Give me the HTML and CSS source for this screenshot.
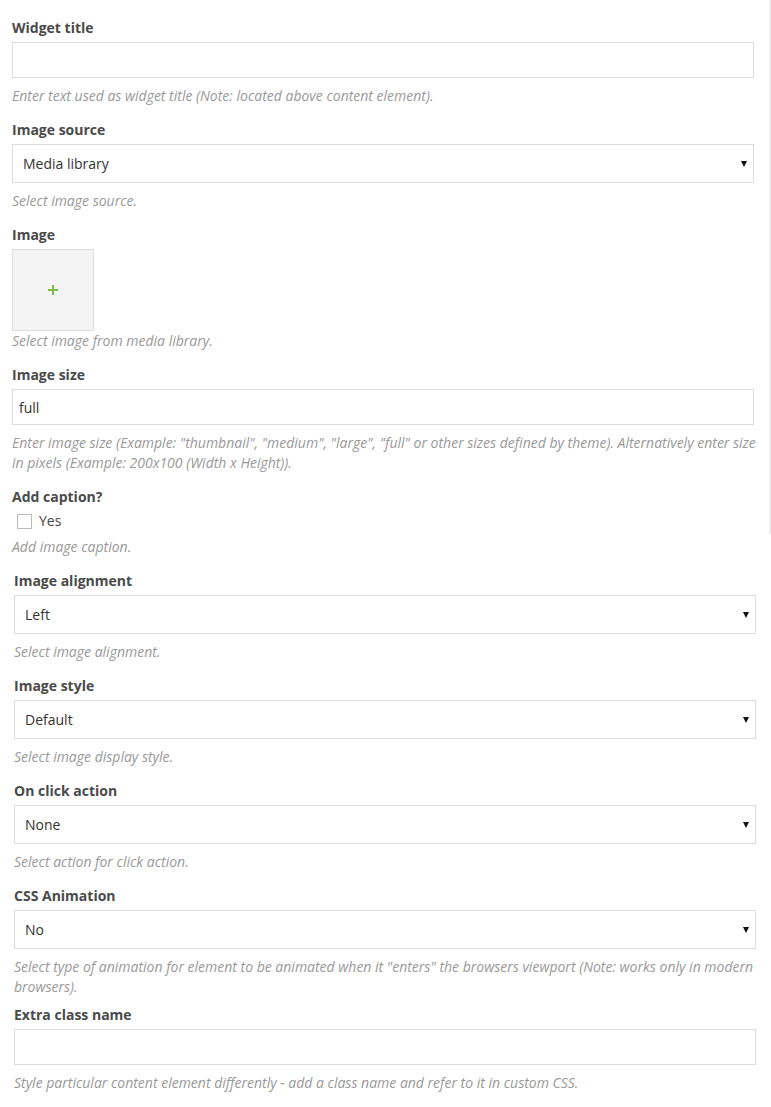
FILE: index.html
```html
<!DOCTYPE html>
<html lang="en">
<head>
<meta charset="utf-8">
<title>Single image settings</title>
<link rel="stylesheet" href="styles.css">
</head>
<body>
<div class="edge"></div>
<form class="panel panel-top">
  <div class="field">
    <label class="label">Widget title</label>
    <input class="input" type="text" value="">
    <p class="help">Enter text used as widget title (Note: located above content element).</p>
  </div>
  <div class="field">
    <label class="label">Image source</label>
    <div class="select"><span class="select-value">Media library</span></div>
    <p class="help">Select image source.</p>
  </div>
  <div class="field">
    <label class="label">Image</label>
    <div class="image-box">
      <svg class="plus" width="10" height="10" viewBox="0 0 10 10"><path d="M5 0v10M0 5h10" stroke="#7dbe48" stroke-width="2"/></svg>
    </div>
    <p class="help help-tight">Select image from media library.</p>
  </div>
  <div class="field">
    <label class="label">Image size</label>
    <input class="input" type="text" value="full">
    <p class="help">Enter image size (Example: "thumbnail", "medium", "large", "full" or other sizes defined by theme). Alternatively enter size in pixels (Example: 200x100 (Width x Height)).</p>
  </div>
  <div class="field">
    <label class="label">Add caption?</label>
    <label class="check"><input class="checkbox" type="checkbox"><span>Yes</span></label>
    <p class="help help-tight">Add image caption.</p>
  </div>
</form>
<form class="panel panel-bottom">
  <div class="field">
    <label class="label">Image alignment</label>
    <div class="select"><span class="select-value">Left</span></div>
    <p class="help">Select image alignment.</p>
  </div>
  <div class="field">
    <label class="label">Image style</label>
    <div class="select"><span class="select-value">Default</span></div>
    <p class="help">Select image display style.</p>
  </div>
  <div class="field">
    <label class="label">On click action</label>
    <div class="select"><span class="select-value">None</span></div>
    <p class="help">Select action for click action.</p>
  </div>
  <div class="field">
    <label class="label">CSS Animation</label>
    <div class="select"><span class="select-value">No</span></div>
    <p class="help">Select type of animation for element to be animated when it "enters" the browsers viewport (Note: works only in modern browsers).</p>
  </div>
  <div class="field field-close">
    <label class="label">Extra class name</label>
    <input class="input" type="text" value="">
    <p class="help">Style particular content element differently - add a class name and refer to it in custom CSS.</p>
  </div>
</form>
</body>
</html>
```
FILE: styles.css
```css
* { box-sizing: border-box; }
html, body { margin: 0; padding: 0; background: #fff; }
body {
  font-family: "Open Sans", "Noto Sans", sans-serif;
  font-size: 14px;
  line-height: 20px;
  color: #444;
  position: relative;
}
.edge {
  position: absolute;
  top: 0;
  right: 0;
  width: 2px;
  height: 534px;
  background: #efefef;
}
.panel { width: 742px; margin: 0; }
.panel-top { margin-left: 12px; padding-top: 18px; }
.panel-bottom { margin-left: 14px; padding-top: 14px; }
.field { display: flex; flex-direction: column; align-items: stretch; }
.field + .field { margin-top: 14px; }
.field-close.field { margin-top: 8px; }
.label {
  font-weight: 700;
  font-size: 14px;
  line-height: 20px;
  color: #4a4a4a;
  margin-bottom: 4px;
}
.input {
  height: 36px;
  width: 100%;
  border: 1px solid #dddddd;
  background: #fff;
  padding: 0 6px;
  font-family: inherit;
  font-size: 14px;
  color: #333;
  margin: 0 0 8px;
  outline: none;
}
.select {
  position: relative;
  height: 39px;
  border: 1px solid #dddddd;
  background: #fff;
  display: flex;
  align-items: center;
  padding: 0 10px;
  margin-bottom: 8px;
  color: #333;
}
.select::after {
  content: "";
  position: absolute;
  right: 6px;
  top: 16px;
  border-left: 3px solid transparent;
  border-right: 3px solid transparent;
  border-top: 6px solid #111;
}
.image-box {
  width: 82px;
  height: 82px;
  border: 1px solid #dedede;
  background: #f4f4f4;
  display: flex;
  align-items: center;
  justify-content: center;
}
.help {
  margin: 0 -4px 0 0;
  font-size: 14px;
  line-height: 20px;
  font-style: italic;
  color: #999999;
}
.check {
  display: flex;
  align-items: center;
  height: 20px;
  margin-bottom: 6px;
  padding-left: 5px;
  color: #444;
}
.checkbox {
  appearance: none;
  -webkit-appearance: none;
  width: 15px;
  height: 15px;
  margin: 0 7px 0 0;
  border: 1px solid #b8b8b8;
  background: #fff;
}
```
